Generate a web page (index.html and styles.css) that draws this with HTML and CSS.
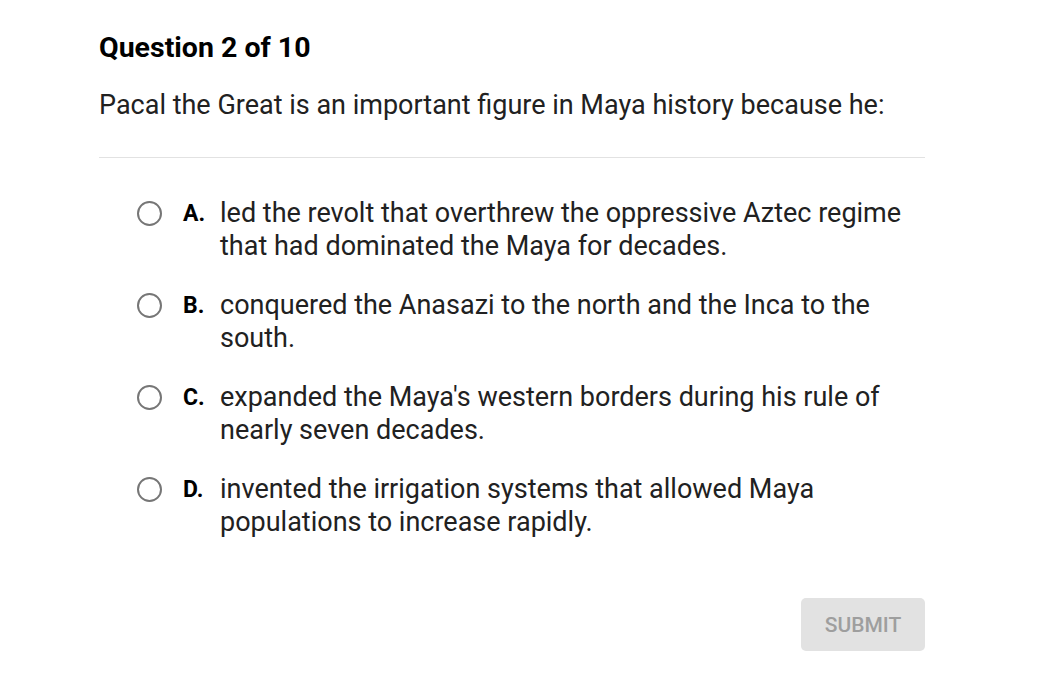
FILE: index.html
```html
<!DOCTYPE html>
<html>
<head>
<meta charset="utf-8">
<link rel="stylesheet" href="styles.css">
</head>
<body>
<div class="quiz">
  <h1 class="title">Question 2 of 10</h1>
  <p class="prompt">Pacal the Great is an important figure in Maya history because he:</p>
  <hr class="divider">
  <ul class="options">
    <li class="option"><span class="radio"></span><span class="letter">A.</span><span class="text">led the revolt that overthrew the oppressive Aztec regime that had dominated the Maya for decades.</span></li>
    <li class="option"><span class="radio"></span><span class="letter">B.</span><span class="text">conquered the Anasazi to the north and the Inca to the south.</span></li>
    <li class="option"><span class="radio"></span><span class="letter">C.</span><span class="text">expanded the Maya's western borders during his rule of nearly seven decades.</span></li>
    <li class="option"><span class="radio"></span><span class="letter">D.</span><span class="text">invented the irrigation systems that allowed Maya populations to increase rapidly.</span></li>
  </ul>
  <div class="actions"><button class="submit">SUBMIT</button></div>
</div>
</body>
</html>
```
FILE: styles.css
```css
html, body { margin: 0; padding: 0; background: #fff; }
body { font-family: Roboto, "Liberation Sans", sans-serif; color: #212121; }
.quiz { width: 826px; padding: 31px 0 0 99px; }
.title { margin: 0; font-size: 28.5px; font-weight: 700; line-height: 34px; color: #000; }
.prompt { margin: 22px 0 0; font-size: 27px; line-height: 36px; color: #212121; }
.divider { margin: 34px 0 0; border: 0; border-top: 1px solid #e2e2e2; height: 0; }
.options { list-style: none; margin: 39px 0 0; padding: 0 0 0 38px; display: flex; flex-direction: column; gap: 26px; }
.option { display: flex; align-items: flex-start; }
.radio { flex: none; width: 21px; height: 21px; border: 2.5px solid #767676; border-radius: 50%; margin-top: 4px; }
.letter { flex: none; width: 37px; margin-left: 21px; font-size: 23px; font-weight: 700; line-height: 33px; color: #000; }
.text { flex: 1; font-size: 27px; line-height: 33px; }
.actions { display: flex; justify-content: flex-end; margin-top: 59px; }
.submit { width: 124px; height: 53px; border: 0; border-radius: 5px; background: #e2e2e2; color: #9e9e9e; font-family: Roboto, "Liberation Sans", sans-serif; font-size: 21px; font-weight: 500; }
```
